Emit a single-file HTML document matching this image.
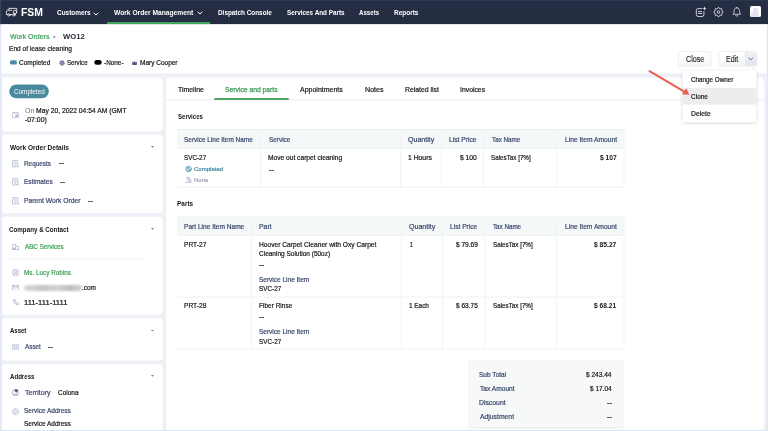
<!DOCTYPE html>
<html><head><meta charset="utf-8"><title>WO12</title>
<style>
*{box-sizing:border-box;margin:0;padding:0}
html,body{width:768px;height:431px;overflow:hidden;background:#eef0f6;font-family:"Liberation Sans",sans-serif;font-size:6.9px;color:#222}
.a{position:absolute;white-space:nowrap;line-height:1;transform-origin:0 0;-webkit-text-stroke:0.2px currentColor}
.r{position:absolute;display:block}
</style></head><body>
<svg class="r" style="left:0;top:0" width="768" height="431" viewBox="0 0 768 431"><defs><linearGradient id="bg1" x1="0" y1="0" x2="0" y2="1"><stop offset="0" stop-color="#ffffff"/><stop offset="1" stop-color="#f5f7fa"/></linearGradient><linearGradient id="bg2" x1="0" y1="0" x2="0" y2="1"><stop offset="0" stop-color="#eff1f6"/><stop offset="1" stop-color="#e2e5ed"/></linearGradient><filter id="ds" x="-10%" y="-10%" width="120%" height="125%"><feDropShadow dx="0" dy="0.5" stdDeviation="1.1" flood-color="#3c4664" flood-opacity="0.32"/></filter></defs>
<rect x="0" y="0" width="768" height="24.3" fill="#252d43"/>
<rect x="107" y="22" width="103" height="2.4" fill="#3fa85a"/>
<rect x="0" y="24.3" width="768" height="49.1" fill="#fff"/>
<rect x="9.8" y="60.2" width="7.2" height="4.4" fill="#4a8ba3" rx="2.2"/>
<rect x="94.3" y="60" width="7.4" height="4.8" fill="#000" rx="2.4"/>
<rect x="678.4" y="51.6" width="32.6" height="14.5" fill="url(#bg1)" rx="2" stroke="#e6e9f0" stroke-width="0.7"/>
<rect x="718.6" y="51.6" width="38.4" height="14.5" fill="url(#bg1)" rx="2" stroke="#e6e9f0" stroke-width="0.7"/>
<path d="M745.4 51.9 H755 Q756.7 51.9 756.7 53.6 V64.1 Q756.7 65.8 755 65.8 H745.4 Z" fill="url(#bg2)"/>
<rect x="745.1" y="51.9" width="0.6" height="13.9" fill="#dde0e8"/>
<rect x="2" y="77.4" width="160.7" height="53.8" fill="#fff" rx="3.4"/>
<rect x="2" y="134.8" width="160.7" height="78.2" fill="#fff" rx="3.4"/>
<rect x="2" y="216.8" width="160.7" height="97.9" fill="#fff" rx="3.4"/>
<rect x="2" y="318.3" width="160.7" height="42.2" fill="#fff" rx="3.4"/>
<rect x="2" y="364.2" width="160.7" height="70.0" fill="#fff" rx="3.4"/>
<rect x="9.3" y="84.5" width="39.5" height="13.8" fill="#4a8a9f" rx="6.9"/>
<rect x="9.2" y="258.5" width="136.0" height="0.8" fill="#e8ebf2"/>
<rect x="165.9" y="77.4" width="598.1" height="357.6" fill="#fff" rx="3.4"/>
<rect x="166" y="98.8" width="598" height="1.8" fill="#f3f4f8"/>
<rect x="214.3" y="98" width="74.4" height="2" fill="#52a568"/>
<rect x="177" y="129.5" width="447" height="18.75" fill="#f5f8f9"/>
<rect x="177" y="129.0" width="447" height="1.0" fill="#eef2f4"/>
<rect x="177" y="147.75" width="447" height="1.0" fill="#eef2f4"/>
<rect x="177" y="186.75" width="447" height="1.0" fill="#eef2f4"/>
<rect x="260.0" y="129.5" width="1.0" height="57.75" fill="#f0f4f5"/>
<rect x="400.0" y="129.5" width="1.0" height="57.75" fill="#f0f4f5"/>
<rect x="441.0" y="129.5" width="1.0" height="57.75" fill="#f0f4f5"/>
<rect x="483.0" y="129.5" width="1.0" height="57.75" fill="#f0f4f5"/>
<rect x="556.25" y="129.5" width="1.0" height="57.75" fill="#f0f4f5"/>
<rect x="623.5" y="129.5" width="1.0" height="57.75" fill="#f0f4f5"/>
<rect x="177" y="216.25" width="447" height="19.25" fill="#f5f8f9"/>
<rect x="177" y="215.75" width="447" height="1.0" fill="#eef2f4"/>
<rect x="177" y="235.0" width="447" height="1.0" fill="#eef2f4"/>
<rect x="177" y="296.5" width="447" height="1.0" fill="#eef2f4"/>
<rect x="177" y="348.75" width="447" height="1.0" fill="#eef2f4"/>
<rect x="251.0" y="216.25" width="1.0" height="133.0" fill="#f0f4f5"/>
<rect x="401.0" y="216.25" width="1.0" height="133.0" fill="#f0f4f5"/>
<rect x="442.0" y="216.25" width="1.0" height="133.0" fill="#f0f4f5"/>
<rect x="484.5" y="216.25" width="1.0" height="133.0" fill="#f0f4f5"/>
<rect x="556.0" y="216.25" width="1.0" height="133.0" fill="#f0f4f5"/>
<rect x="623.5" y="216.25" width="1.0" height="133.0" fill="#f0f4f5"/>
<rect x="468" y="360" width="156.25" height="69.6" fill="#f7f9f9"/>
<path d="M475 427.5 H617" stroke="#cfd6da" stroke-width="0.7" stroke-dasharray="0.8 0.8"/>
<g filter="url(#ds)"><path d="M684 70.6 H747.6 L750.9 67.4 L754.2 70.6 H755 Q756.6 70.6 756.6 72.2 V121 Q756.6 122.6 755 122.6 H684 Q682.4 122.6 682.4 121 V72.2 Q682.4 70.6 684 70.6 Z" fill="#fff"/></g>
<rect x="682.4" y="88" width="74.2" height="16.6" fill="#ededed"/>
<path d="M649.5 71.1 L685.5 92.4" stroke="#ea5f4f" stroke-width="1.95" stroke-linecap="round" fill="none"/><path d="M689.3 94.7 L681.8 94.2 L686.4 88.2 Z" fill="#ea5f4f"/>
<rect x="0" y="24.3" width="1.3" height="406.7" fill="#e1e8f8"/>
<rect x="766.9" y="24.3" width="1.1" height="406.7" fill="#dde6f8"/>
<rect x="0" y="430" width="768" height="1" fill="#dde5f4"/>
<rect x="0" y="0" width="1.3" height="24.3" fill="#34425f"/>
<rect x="0" y="0" width="768" height="0.8" fill="#2f3a55"/>
</svg>
<span class="a" style="left:21.17px;top:8.00px;font-size:10.3px;font-weight:bold;-webkit-text-stroke:0;color:#fff;transform:scaleX(1.0101);">FSM</span>
<span class="a" style="left:56.54px;top:10.00px;font-size:6.9px;font-weight:bold;-webkit-text-stroke:0;color:#fff;transform:scaleX(0.9343);">Customers</span>
<span class="a" style="left:114.45px;top:10.00px;font-size:6.9px;font-weight:bold;-webkit-text-stroke:0;color:#fff;transform:scaleX(0.9684);">Work Order Management</span>
<span class="a" style="left:217.75px;top:10.00px;font-size:6.9px;font-weight:bold;-webkit-text-stroke:0;color:#fff;transform:scaleX(0.9253);">Dispatch Console</span>
<span class="a" style="left:286.76px;top:10.00px;font-size:6.9px;font-weight:bold;-webkit-text-stroke:0;color:#fff;transform:scaleX(0.9209);">Services And Parts</span>
<span class="a" style="left:359.27px;top:10.00px;font-size:6.9px;font-weight:bold;-webkit-text-stroke:0;color:#fff;transform:scaleX(0.8917);">Assets</span>
<span class="a" style="left:394.25px;top:10.00px;font-size:6.9px;font-weight:bold;-webkit-text-stroke:0;color:#fff;transform:scaleX(0.9379);">Reports</span>
<svg class="r" style="left:93px;top:11.5px" width="6" height="4" viewBox="0 0 6 4"><path d="M0.7 0.8 L3 3 L5.3 0.8" fill="none" stroke="#fff" stroke-width="1"/></svg>
<svg class="r" style="left:196.7px;top:11.2px" width="6" height="4" viewBox="0 0 6 4"><path d="M0.7 0.8 L3 3 L5.3 0.8" fill="none" stroke="#fff" stroke-width="1"/></svg>
<svg class="r" style="left:5px;top:7px" width="13" height="10" viewBox="5 7 13 10" fill="none" stroke="#fff" stroke-width="0.8" stroke-linejoin="round" stroke-linecap="round"><path d="M9.3 8.4 H16.7 V10.3 M9.3 8.4 L6.4 11.2 V14.5 H7.6 M10.2 14.6 H12.6 M8.2 10.3 H11.6 M15.0 14.0 V14.6"/><circle cx="8.9" cy="14.9" r="1.15"/><circle cx="13.9" cy="14.9" r="1.15"/><circle cx="15.0" cy="12.0" r="1.75"/></svg>
<svg class="r" style="left:694px;top:5px" width="14" height="14" viewBox="694 5 14 14" fill="none" stroke="#fff" stroke-width="0.75" stroke-linecap="round"><path d="M701.6 8.6 H698.2 Q696.3 8.6 696.3 10.5 V14.6 Q696.3 16.5 698.2 16.5 H702 Q703.9 16.5 703.9 14.6 V11.6"/><path d="M698.3 11.6 H701.7 M698.3 13.5 H701.7"/><path d="M704.5 7.2 V9.8 M703.2 8.5 H705.8" stroke-width="0.7"/></svg>
<svg class="r" style="left:712px;top:6px" width="13" height="13" viewBox="712 6 13 13" fill="none" stroke="#fff" stroke-width="0.75" stroke-linejoin="round"><path d="M718.05 7.57 L718.95 7.57 L719.56 8.61 L720.22 8.88 L721.39 8.58 L722.02 9.21 L721.72 10.38 L721.99 11.04 L723.03 11.65 L723.03 12.55 L721.99 13.16 L721.72 13.82 L722.02 14.99 L721.39 15.62 L720.22 15.32 L719.56 15.59 L718.95 16.63 L718.05 16.63 L717.44 15.59 L716.78 15.32 L715.61 15.62 L714.98 14.99 L715.28 13.82 L715.01 13.16 L713.97 12.55 L713.97 11.65 L715.01 11.04 L715.28 10.38 L714.98 9.21 L715.61 8.58 L716.78 8.88 L717.44 8.61 Z"/><circle cx="718.5" cy="12.1" r="1.35"/></svg>
<svg class="r" style="left:732px;top:7.2px" width="9.6" height="10" viewBox="0 0 19 20" fill="none" stroke="#fff" stroke-width="1.4" stroke-linecap="round" stroke-linejoin="round"><path d="M9.5 1.5 C5.5 1.5 4.2 4.5 4.2 7.5 C4.2 11 3.2 12.5 1.8 14.5 H17.2 C15.8 12.5 14.8 11 14.8 7.5 C14.8 4.5 13.5 1.5 9.5 1.5 Z"/><path d="M7.5 17.6 Q9.5 19 11.5 17.6"/></svg>
<div class="r" style="left:749.9px;top:6.2px;width:11.2px;height:11.2px;background:#fdfdfe;border-radius:1.6px;overflow:hidden"><div style="position:absolute;left:3.4px;top:1.6px;width:4.4px;height:5px;border-radius:2.2px;background:#e1e5ee"></div><div style="position:absolute;left:1.6px;top:6px;width:8px;height:6px;border-radius:3px 3px 0 0;background:#e1e5ee"></div></div>
<span class="a" style="left:10.00px;top:34.00px;font-size:6.9px;color:#3b9c56;transform:scaleX(1.0127);">Work Orders</span>
<svg class="r" style="left:52.6px;top:35px" width="3" height="4" viewBox="0 0 3 4"><path d="M0.5 0.6 L2.5 2 L0.5 3.4 Z" fill="#6b7aa0"/></svg>
<span class="a" style="left:62.50px;top:33.00px;font-size:7.5px;font-weight:bold;-webkit-text-stroke:0;color:#262a3a;transform:scaleX(1.0190);">WO12</span>
<span class="a" style="left:9.47px;top:46.00px;font-size:6.9px;color:#161616;transform:scaleX(0.9554);">End of lease cleaning</span>
<span class="a" style="left:19.28px;top:60.00px;font-size:6.9px;color:#161616;transform:scaleX(0.9396);">Completed</span>
<svg class="r" style="left:58.7px;top:59.6px" width="6" height="6" viewBox="0 0 12 12"><circle cx="6" cy="6" r="4.3" fill="#aab2cb" stroke="#5f6b8f" stroke-width="2.2" stroke-dasharray="2.2 1.1"/><circle cx="6" cy="6" r="3.2" fill="none" stroke="#6e7a9b" stroke-width="1.4"/><circle cx="6" cy="6" r="1.4" fill="#5f6b8f"/></svg>
<span class="a" style="left:66.79px;top:60.00px;font-size:6.9px;color:#161616;transform:scaleX(0.8946);">Service</span>
<span class="a" style="left:104.24px;top:60.00px;font-size:6.9px;color:#161616;transform:scaleX(0.9271);">-None-</span>
<svg class="r" style="left:131.9px;top:60.7px" width="5.2" height="4.3" viewBox="0 0 10.4 8.6"><path d="M0.8 2 L3.2 4 L5.2 0.9 L7.2 4 L9.6 2 L8.8 7.8 H1.6 Z" fill="#4f5782" stroke="#4f5782" stroke-width="1.4" stroke-linejoin="round"/></svg>
<span class="a" style="left:139.68px;top:60.00px;font-size:6.9px;color:#161616;transform:scaleX(0.9424);">Mary Cooper</span>
<span class="a" style="left:685.64px;top:55.00px;font-size:8.3px;color:#1c1c1c;transform:scaleX(0.8620);-webkit-text-stroke:0.12px #1c1c1c;">Close</span>
<span class="a" style="left:726.23px;top:55.00px;font-size:8.3px;color:#1c1c1c;transform:scaleX(0.8522);-webkit-text-stroke:0.12px #1c1c1c;">Edit</span>
<svg class="r" style="left:748.2px;top:57px" width="5.6" height="3.6" viewBox="0 0 5.6 3.6"><path d="M0.6 0.7 L2.8 2.8 L5 0.7" fill="none" stroke="#5f6b8f" stroke-width="1"/></svg>
<span class="a" style="left:14.08px;top:89.00px;font-size:6.9px;color:#fff;transform:scaleX(0.9211);-webkit-text-stroke:0;">Completed</span>
<svg class="r" style="left:12px;top:111.8px" width="7" height="6.2" viewBox="0 0 14 12.4" fill="none" stroke="#9aa3bd" stroke-width="1.3"><rect x="0.8" y="1.4" width="12.4" height="10" rx="1.6"/><path d="M3.6 0 V2.6 M10.4 0 V2.6"/><rect x="7.4" y="6" width="3.4" height="3" /></svg>
<span class="a" style="left:24.55px;top:108.00px;font-size:6.9px;color:#6b7899;transform:scaleX(1.0216);-webkit-text-stroke:0.05px #6b7899;">On</span>
<span class="a" style="left:35.86px;top:108.00px;font-size:6.9px;color:#161616;transform:scaleX(0.9815);">May 20, 2022 04:54 AM (GMT</span>
<span class="a" style="left:24.63px;top:117.00px;font-size:6.9px;color:#161616;transform:scaleX(0.9961);">-07:00)</span>
<span class="a" style="left:9.70px;top:145.00px;font-size:6.9px;font-weight:bold;-webkit-text-stroke:0;color:#161616;transform:scaleX(0.9469);">Work Order Details</span>
<svg class="r" style="left:150.6px;top:146.0px" width="3" height="1.8" viewBox="0 0 3 1.8"><path d="M0 0 H3 L1.5 1.8 Z" fill="#6b7aa0"/></svg>
<svg class="r" style="left:12px;top:159.9px" width="7.6" height="8" viewBox="0 0 15.2 16" fill="none" stroke="#9aa3bd" stroke-width="1.3"><path d="M7 14 H2.4 Q0.8 14 0.8 12.4 V2.4 Q0.8 0.8 2.4 0.8 H9.6 Q11.2 0.8 11.2 2.4 V7"/><path d="M3.4 4.4 H8.6 M3.4 7.4 H6"/><circle cx="9.4" cy="10.6" r="2.8"/><path d="M11.6 12.8 L14.4 15.4"/></svg>
<span class="a" style="left:24.39px;top:161.00px;font-size:6.9px;color:#38466b;transform:scaleX(0.9226);">Requests</span>
<span class="a" style="left:58.60px;top:160.00px;font-size:6.9px;color:#161616;transform:scaleX(1.0745);">--</span>
<svg class="r" style="left:12px;top:178.2px" width="7.6" height="8" viewBox="0 0 15.2 16" fill="none" stroke="#9aa3bd" stroke-width="1.3"><path d="M7 14 H2.4 Q0.8 14 0.8 12.4 V2.4 Q0.8 0.8 2.4 0.8 H9.6 Q11.2 0.8 11.2 2.4 V7"/><path d="M3.4 4.4 H8.6 M3.4 7.4 H6"/><circle cx="9.4" cy="10.6" r="2.8"/><path d="M11.6 12.8 L14.4 15.4"/></svg>
<span class="a" style="left:24.38px;top:179.00px;font-size:6.9px;color:#38466b;transform:scaleX(0.9503);">Estimates</span>
<span class="a" style="left:60.20px;top:179.00px;font-size:6.9px;color:#161616;transform:scaleX(1.0995);">--</span>
<svg class="r" style="left:12px;top:196.9px" width="7.6" height="8" viewBox="0 0 15.2 16" fill="none" stroke="#9aa3bd" stroke-width="1.3"><path d="M7 14 H2.4 Q0.8 14 0.8 12.4 V2.4 Q0.8 0.8 2.4 0.8 H9.6 Q11.2 0.8 11.2 2.4 V7"/><path d="M3.4 4.4 H8.6 M3.4 7.4 H6"/><circle cx="9.4" cy="10.6" r="2.8"/><path d="M11.6 12.8 L14.4 15.4"/></svg>
<span class="a" style="left:24.36px;top:198.00px;font-size:6.9px;color:#38466b;transform:scaleX(0.9802);">Parent Work Order</span>
<span class="a" style="left:88.21px;top:198.00px;font-size:6.9px;color:#161616;transform:scaleX(1.0495);">--</span>
<span class="a" style="left:9.45px;top:227.00px;font-size:6.9px;font-weight:bold;-webkit-text-stroke:0;color:#161616;transform:scaleX(0.9047);">Company &amp; Contact</span>
<svg class="r" style="left:150.6px;top:228.3px" width="3" height="1.8" viewBox="0 0 3 1.8"><path d="M0 0 H3 L1.5 1.8 Z" fill="#6b7aa0"/></svg>
<svg class="r" style="left:11.6px;top:243.8px" width="7" height="6" viewBox="0 0 14 12" fill="none" stroke="#9aa3bd" stroke-width="1.3"><path d="M0.8 11.2 V1.6 Q0.8 0.8 1.6 0.8 H6.6 Q7.4 0.8 7.4 1.6 V11.2 M7.4 4.6 H11.6 Q13 4.6 13 6 V11.2 M0 11.2 H14"/><path d="M3 8 H5.2 V11 H3 Z"/></svg>
<span class="a" style="left:24.70px;top:244.00px;font-size:6.9px;color:#3b9c56;transform:scaleX(0.9102);">ABC Services</span>
<svg class="r" style="left:11.6px;top:269.2px" width="7.2" height="7.2" viewBox="0 0 14.4 14.4" fill="none" stroke="#9aa3bd" stroke-width="1.3"><circle cx="7.2" cy="7.2" r="6.4"/><circle cx="7.2" cy="5.6" r="2.2"/><path d="M3 12 Q3.6 8.8 7.2 8.8 Q10.8 8.8 11.4 12"/></svg>
<span class="a" style="left:24.19px;top:270.00px;font-size:6.9px;color:#3b9c56;transform:scaleX(0.9230);">Ms. Lucy Robins</span>
<svg class="r" style="left:11.6px;top:284.6px" width="7.2" height="5.6" viewBox="0 0 14.4 11.2" fill="none" stroke="#8f9bbd" stroke-width="1.3"><rect x="0.8" y="0.8" width="12.8" height="9.6" rx="1.2"/><path d="M1.2 1.6 L7.2 5.8 L13.2 1.6"/></svg>
<div class="r" style="left:24.2px;top:284.6px;width:58px;height:6.6px;border-radius:2px;background:linear-gradient(90deg,#d9d9d9,#c4c4c4 30%,#cfcfcf 60%,#bdbdbd 80%,#d2d2d2);filter:blur(0.9px)"></div>
<span class="a" style="left:82.42px;top:285.00px;font-size:6.9px;color:#161616;transform:scaleX(0.9373);">.com</span>
<svg class="r" style="left:12.6px;top:298.8px" width="6.2" height="6.2" viewBox="0 0 12.4 12.4" fill="none" stroke="#9aa3bd" stroke-width="1.3" stroke-linejoin="round"><path d="M2.4 0.8 H4.4 L5.6 3.8 L4 5 Q5.2 7.4 7.6 8.6 L8.8 7 L11.8 8.2 V10.2 Q11.8 11.6 10.4 11.6 Q1 11 0.8 2.2 Q0.8 0.8 2.4 0.8 Z"/></svg>
<span class="a" style="left:24.29px;top:300.00px;font-size:6.9px;color:#161616;transform:scaleX(1.1038);">111-111-1111</span>
<span class="a" style="left:9.72px;top:328.00px;font-size:6.9px;font-weight:bold;-webkit-text-stroke:0;color:#161616;transform:scaleX(0.8706);">Asset</span>
<svg class="r" style="left:150.6px;top:329.5px" width="3" height="1.8" viewBox="0 0 3 1.8"><path d="M0 0 H3 L1.5 1.8 Z" fill="#6b7aa0"/></svg>
<svg class="r" style="left:12px;top:343.6px" width="6.8" height="6.6" viewBox="0 0 13.6 13.2" fill="none" stroke="#9aa3bd" stroke-width="1.2"><rect x="0.7" y="0.7" width="5" height="4.8" rx="0.8"/><rect x="7.9" y="0.7" width="5" height="4.8" rx="0.8"/><rect x="0.7" y="7.7" width="5" height="4.8" rx="0.8"/><rect x="7.9" y="7.7" width="5" height="4.8" rx="0.8"/></svg>
<span class="a" style="left:24.70px;top:344.00px;font-size:6.9px;color:#38466b;transform:scaleX(0.9196);">Asset</span>
<span class="a" style="left:47.91px;top:344.00px;font-size:6.9px;color:#161616;transform:scaleX(1.0495);">--</span>
<span class="a" style="left:9.72px;top:374.00px;font-size:6.9px;font-weight:bold;-webkit-text-stroke:0;color:#161616;transform:scaleX(0.8865);">Address</span>
<svg class="r" style="left:150.6px;top:375.1px" width="3" height="1.8" viewBox="0 0 3 1.8"><path d="M0 0 H3 L1.5 1.8 Z" fill="#6b7aa0"/></svg>
<svg class="r" style="left:12px;top:388.9px" width="7" height="7.2" viewBox="0 0 14 14.4" fill="none" stroke="#7f8bb0" stroke-width="1.3"><circle cx="7" cy="7.4" r="6.2"/><path d="M8.6 0.4 Q11.4 0.4 11.4 3 Q11.4 5 8.6 7.6 Q5.8 5 5.8 3 Q5.8 0.4 8.6 0.4 Z" fill="#4d5878" stroke="#4d5878" stroke-width="0.6"/><path d="M2.6 10.6 H11.4" /></svg>
<span class="a" style="left:24.56px;top:390.00px;font-size:6.9px;color:#38466b;transform:scaleX(1.0294);">Territory</span>
<span class="a" style="left:57.68px;top:390.00px;font-size:6.9px;color:#161616;transform:scaleX(0.9383);">Colona</span>
<svg class="r" style="left:12.2px;top:408.2px" width="7.2" height="7.2" viewBox="0 0 14.4 14.4" fill="none" stroke="#b4bacb" stroke-width="1.3"><circle cx="7.2" cy="7.2" r="6.2"/><circle cx="7.2" cy="7.2" r="2.6"/><path d="M7.2 1 V4.6 M7.2 9.8 V13.4 M1 7.2 H4.6 M9.8 7.2 H13.4"/></svg>
<span class="a" style="left:24.38px;top:408.00px;font-size:6.9px;color:#38466b;transform:scaleX(0.9398);">Service Address</span>
<span class="a" style="left:24.38px;top:421.00px;font-size:6.9px;color:#161616;transform:scaleX(0.9398);">Service Address</span>
<span class="a" style="left:177.56px;top:87.00px;font-size:6.9px;color:#161616;transform:scaleX(1.0043);">Timeline</span>
<span class="a" style="left:225.36px;top:87.00px;font-size:6.9px;color:#3b9c56;transform:scaleX(0.9800);-webkit-text-stroke:0.25px #3b9c56;">Service and parts</span>
<span class="a" style="left:300.20px;top:87.00px;font-size:6.9px;color:#161616;transform:scaleX(1.0147);">Appointments</span>
<span class="a" style="left:364.63px;top:87.00px;font-size:6.9px;color:#161616;transform:scaleX(1.0331);">Notes</span>
<span class="a" style="left:404.65px;top:87.00px;font-size:6.9px;color:#161616;transform:scaleX(0.9915);">Related list</span>
<span class="a" style="left:460.33px;top:87.00px;font-size:6.9px;color:#161616;transform:scaleX(0.9928);">Invoices</span>
<span class="a" style="left:177.52px;top:114.00px;font-size:6.9px;font-weight:bold;-webkit-text-stroke:0;color:#161616;transform:scaleX(0.8767);">Services</span>
<span class="a" style="left:177.25px;top:201.00px;font-size:6.9px;font-weight:bold;-webkit-text-stroke:0;color:#161616;transform:scaleX(0.9360);">Parts</span>
<span class="a" style="left:184.38px;top:137.00px;font-size:6.9px;color:#38466b;transform:scaleX(0.9358);">Service Line Item Name</span>
<span class="a" style="left:268.63px;top:137.00px;font-size:6.9px;color:#38466b;transform:scaleX(0.9282);">Service</span>
<span class="a" style="left:407.85px;top:137.00px;font-size:6.9px;color:#38466b;transform:scaleX(1.0267);">Quantity</span>
<span class="a" style="left:448.91px;top:137.00px;font-size:6.9px;color:#38466b;transform:scaleX(0.9716);">List Price</span>
<span class="a" style="left:491.57px;top:137.00px;font-size:6.9px;color:#38466b;transform:scaleX(0.9140);">Tax Name</span>
<span class="a" style="left:564.66px;top:137.00px;font-size:6.9px;color:#38466b;transform:scaleX(0.9706);">Line Item Amount</span>
<span class="a" style="left:184.48px;top:155.00px;font-size:6.9px;color:#161616;transform:scaleX(0.9180);">SVC-27</span>
<svg class="r" style="left:184px;top:164px" width="10" height="10" viewBox="184 164 10 10" fill="none" stroke="#4a8fa5" stroke-width="0.85" stroke-linecap="round"><circle cx="188.6" cy="169" r="2.75"/><path d="M187.2 167.9 H189.4 M187.3 167.9 L189.9 170.2 M187.8 170.2 H190"/></svg>
<span class="a" style="left:194.10px;top:167.00px;font-size:5.9px;color:#3f8aa0;transform:scaleX(1.0234);">Completed</span>
<svg class="r" style="left:184px;top:175px" width="10" height="10" viewBox="184 175 10 10" fill="none" stroke="#aeb1c6" stroke-width="0.8"><path d="M186 177.4 H189.3 V182.3 H185.4 M186.8 178.8 H188.6 M186.8 180.3 H188.6 M189.3 179.4 H190.9 V182.3 H189.3" /></svg>
<span class="a" style="left:193.92px;top:178.00px;font-size:5.9px;color:#a3a5b6;transform:scaleX(1.0274);">None</span>
<span class="a" style="left:268.42px;top:155.00px;font-size:6.9px;color:#161616;transform:scaleX(0.9625);">Move out carpet cleaning</span>
<span class="a" style="left:268.66px;top:167.00px;font-size:6.9px;color:#161616;transform:scaleX(1.0620);">--</span>
<span class="a" style="left:407.66px;top:155.00px;font-size:6.9px;color:#161616;transform:scaleX(0.9862);">1 Hours</span>
<span class="a" style="left:459.63px;top:155.00px;font-size:6.9px;color:#161616;transform:scaleX(0.9721);">$ 100</span>
<span class="a" style="left:491.39px;top:155.00px;font-size:6.9px;color:#161616;transform:scaleX(0.9087);">SalesTax [7%]</span>
<span class="a" style="left:600.13px;top:155.00px;font-size:6.9px;font-weight:bold;-webkit-text-stroke:0;color:#161616;transform:scaleX(0.9760);">$ 107</span>
<span class="a" style="left:184.17px;top:224.00px;font-size:6.9px;color:#38466b;transform:scaleX(0.9539);">Part Line Item Name</span>
<span class="a" style="left:259.15px;top:224.00px;font-size:6.9px;color:#38466b;transform:scaleX(0.9938);">Part</span>
<span class="a" style="left:409.10px;top:224.00px;font-size:6.9px;color:#38466b;transform:scaleX(1.0267);">Quantity</span>
<span class="a" style="left:450.42px;top:224.00px;font-size:6.9px;color:#38466b;transform:scaleX(0.9626);">List Price</span>
<span class="a" style="left:493.07px;top:224.00px;font-size:6.9px;color:#38466b;transform:scaleX(0.9058);">Tax Name</span>
<span class="a" style="left:564.67px;top:224.00px;font-size:6.9px;color:#38466b;transform:scaleX(0.9668);">Line Item Amount</span>
<span class="a" style="left:184.27px;top:242.00px;font-size:6.9px;color:#161616;transform:scaleX(0.9654);">PRT-27</span>
<span class="a" style="left:409.97px;top:242.00px;font-size:6.9px;color:#161616;transform:scaleX(0.7752);">1</span>
<span class="a" style="left:455.88px;top:242.00px;font-size:6.9px;color:#161616;transform:scaleX(0.9500);">$ 79.69</span>
<span class="a" style="left:492.89px;top:242.00px;font-size:6.9px;color:#161616;transform:scaleX(0.9087);">SalesTax [7%]</span>
<span class="a" style="left:594.43px;top:242.00px;font-size:6.9px;font-weight:bold;-webkit-text-stroke:0;color:#161616;transform:scaleX(0.9721);">$ 85.27</span>
<span class="a" style="left:184.27px;top:303.00px;font-size:6.9px;color:#161616;transform:scaleX(0.9654);">PRT-28</span>
<span class="a" style="left:408.99px;top:303.00px;font-size:6.9px;color:#161616;transform:scaleX(0.9271);">1 Each</span>
<span class="a" style="left:455.88px;top:303.00px;font-size:6.9px;color:#161616;transform:scaleX(0.9471);">$ 63.75</span>
<span class="a" style="left:492.89px;top:303.00px;font-size:6.9px;color:#161616;transform:scaleX(0.9087);">SalesTax [7%]</span>
<span class="a" style="left:594.43px;top:303.00px;font-size:6.9px;font-weight:bold;-webkit-text-stroke:0;color:#161616;transform:scaleX(0.9662);">$ 68.21</span>
<span class="a" style="left:259.17px;top:242.00px;font-size:6.9px;color:#161616;transform:scaleX(0.9640);">Hoover Carpet Cleaner with Oxy Carpet</span>
<span class="a" style="left:259.37px;top:251.00px;font-size:6.9px;color:#161616;transform:scaleX(0.9426);">Cleaning Solution (50oz)</span>
<span class="a" style="left:259.39px;top:262.00px;font-size:6.9px;color:#161616;transform:scaleX(1.1244);">--</span>
<span class="a" style="left:259.37px;top:277.00px;font-size:6.9px;color:#38466b;transform:scaleX(0.9427);">Service Line Item</span>
<span class="a" style="left:259.48px;top:286.00px;font-size:6.9px;color:#161616;transform:scaleX(0.9201);">SVC-27</span>
<span class="a" style="left:259.18px;top:303.00px;font-size:6.9px;color:#161616;transform:scaleX(0.9439);">Fiber Rinse</span>
<span class="a" style="left:259.39px;top:314.00px;font-size:6.9px;color:#161616;transform:scaleX(1.1244);">--</span>
<span class="a" style="left:259.37px;top:329.00px;font-size:6.9px;color:#38466b;transform:scaleX(0.9427);">Service Line Item</span>
<span class="a" style="left:259.48px;top:339.00px;font-size:6.9px;color:#161616;transform:scaleX(0.9201);">SVC-27</span>
<span class="a" style="left:479.37px;top:372.00px;font-size:6.9px;color:#38466b;transform:scaleX(0.9506);">Sub Total</span>
<span class="a" style="left:586.13px;top:372.00px;font-size:6.9px;color:#161616;transform:scaleX(0.9480);">$ 243.44</span>
<span class="a" style="left:479.57px;top:386.00px;font-size:6.9px;color:#38466b;transform:scaleX(0.9615);">Tax Amount</span>
<span class="a" style="left:589.88px;top:386.00px;font-size:6.9px;color:#161616;transform:scaleX(0.9442);">$ 17.04</span>
<span class="a" style="left:479.15px;top:400.00px;font-size:6.9px;color:#38466b;transform:scaleX(0.9916);">Discount</span>
<span class="a" style="left:606.91px;top:400.00px;font-size:6.9px;color:#161616;transform:scaleX(1.0620);">--</span>
<span class="a" style="left:479.70px;top:414.00px;font-size:6.9px;color:#38466b;transform:scaleX(0.9875);">Adjustment</span>
<span class="a" style="left:606.91px;top:414.00px;font-size:6.9px;color:#161616;transform:scaleX(1.0620);">--</span>
<span class="a" style="left:691.48px;top:77.00px;font-size:6.9px;color:#161616;transform:scaleX(0.9140);">Change Owner</span>
<span class="a" style="left:691.47px;top:94.00px;font-size:6.9px;color:#161616;transform:scaleX(0.9432);">Clone</span>
<span class="a" style="left:691.26px;top:111.00px;font-size:6.9px;color:#161616;transform:scaleX(0.9872);">Delete</span>
</body></html>
